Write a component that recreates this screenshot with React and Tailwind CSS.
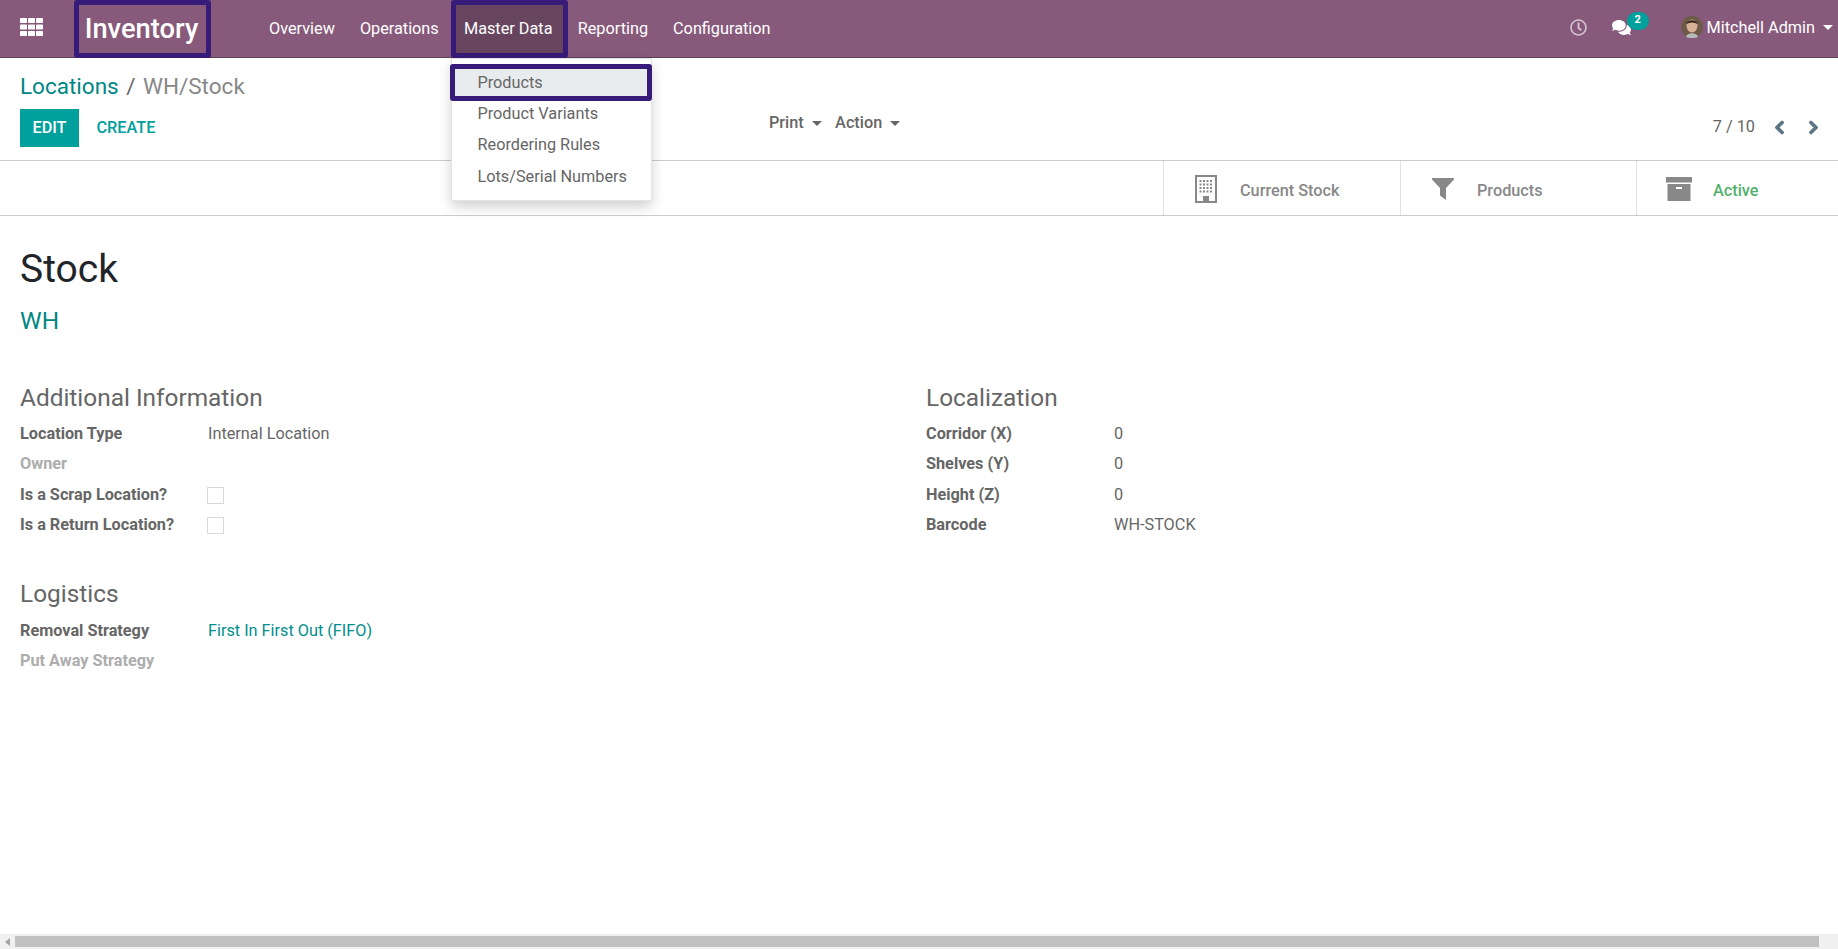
import React from "react";
import { FaChevronLeft, FaChevronRight, FaComments, FaRegClock } from "react-icons/fa";

const font = { fontFamily: "Roboto, sans-serif" };

const AppsIcon = () => (
  <svg width="23" height="18" viewBox="0 0 23 18" fill="#fff">
    {[0, 8, 16].map((x) =>
      [0, 6.5, 13].map((y) => <rect key={`${x}-${y}`} x={x} y={y} width="7" height="5" rx="0.8" />)
    )}
  </svg>
);

const BuildingIcon = () => (
  <svg width="22" height="28" viewBox="0 0 22 28" fill="#888">
    <path d="M0 0h22v28H0zM2 2v24h6v-5h6v5h6V2z" fillRule="evenodd" />
    {[5, 8.5, 12, 15.5].map((y) =>
      [4.5, 8, 11.5, 15].map((x) => <rect key={`${x}-${y}`} x={x} y={y} width="2" height="2" />)
    )}
  </svg>
);

const FilterIcon = () => (
  <svg width="22" height="22" viewBox="0 0 22 22" fill="#888">
    <path d="M0 0h22v1.5L14 10v12l-6-4.500V10L0 1.500z" />
  </svg>
);

const ArchiveIcon = () => (
  <svg width="26" height="24" viewBox="0 0 26 24" fill="#888">
    <rect x="0" y="0" width="26" height="5.500" />
    <path d="M1.500 7h23v17h-23zM10 10v2h6v-2z" fillRule="evenodd" />
  </svg>
);

const Avatar = () => (
  <svg width="22" height="22" viewBox="0 0 22 22">
    <circle cx="11" cy="11" r="11" fill="#6d5a47" />
    <ellipse cx="11" cy="10" rx="5.500" ry="6.500" fill="#d8b199" />
    <path d="M5 8c1-5 11-5 12 0-4-2-8-2-12 0z" fill="#38291f" />
    <path d="M5 21c1-5 11-5 12 0-3 1.500-9 1.500-12 0z" fill="#b4bdb8" />
  </svg>
);

const Caret = ({ color = "border-t-[#fff]" }) => (
  <span className={`inline-block w-0 h-0 border-x-[5px] border-x-transparent border-t-[5px] ${color}`} />
);

const NavItem = ({ children, className = "" }) => <span className={`px-[13px] text-[#fff] ${className}`}>{children}</span>;

const Field = ({ label, value, muted, checkbox, link }) => (
  <div className="flex h-[30.3px] items-center">
    <span className={`w-[188px] font-bold ${muted ? "text-[#adadad]" : "text-[#666]"}`}>{label}</span>
    {checkbox && <span className="w-[17px] h-[17px] -ml-[1px] mt-[1px] border border-[#d9d9d9] bg-[#fff]" />}
    {value && <span className={link ? "text-[#008f8c]" : "text-[#666]"}>{value}</span>}
  </div>
);

const StatButton = ({ icon, label, width, green }) => (
  <div className={`${width} h-full pt-[5px] flex items-center border-l border-[#dee2e6]`}>
    <span className="w-[76px] pl-[7px] flex justify-center shrink-0 -mt-[3px]">{icon}</span>
    <span className={`font-medium mt-[2px] ${green ? "text-[#4fb169]" : "text-[#888]"}`}>{label}</span>
  </div>
);

export default function App() {
  return (
    <div className="relative h-[949px] w-full flex flex-col text-[16.25px] overflow-hidden bg-[#fff]" style={font}>
      {/* top bar */}
      <div className="h-[58px] bg-[#875A7B] border-b border-[#5f4057] flex items-center shrink-0">
        <div className="w-[74px] pl-[20px] flex -mt-[4px]"><AppsIcon /></div>
        <div className="w-[137px] h-[58px] border-[5px] rounded-[3px] border-[#371b78] pt-[1px] pr-[2px] flex items-center justify-center text-[#fff] text-[27.3px] font-medium">
          Inventory
        </div>
        <div className="flex items-center ml-[45px] pt-[1px]">
          <NavItem>Overview</NavItem>
          <NavItem className="-ml-[1px]">Operations</NavItem>
          <div className="w-[117px] -ml-[1px] h-[58px] border-[5px] rounded-[3px] border-[#371b78] bg-[#68455f] pr-[2px] flex items-center justify-center text-[#fff]">
            Master Data
          </div>
          <NavItem className="-ml-[3px]">Reporting</NavItem>
          <NavItem className="-ml-[1px]">Configuration</NavItem>
        </div>
        <div className="ml-auto flex items-center -mt-[3px]">
          <FaRegClock className="text-[#d5c4d1] text-[17px] mr-[25px]" />
          <div className="relative mr-[50px]">
            <FaComments className="text-[#fff] text-[19px]" />
            <span className="absolute -top-[6px] left-[15px] w-[22px] h-[18px] rounded-full bg-[#00A09D] text-[#fff] text-[11px] font-bold flex items-center justify-center">
              2
            </span>
          </div>
          <Avatar />
          <span className="text-[#fff] ml-[4px] mr-[8px] mt-[3px]">Mitchell Admin</span>
          <span className="mr-[5px] flex"><Caret /></span>
        </div>
      </div>

      {/* control panel */}
      <div className="h-[103px] shrink-0 border-b border-[#ccc] flex flex-col px-[20px] pt-[12px]">
        <div className="text-[22.5px] leading-[32px] text-[#888]">
          <span className="text-[#008784]">Locations</span>
          <span className="mx-[7.5px] text-[#666]">/</span>
          <span>WH/Stock</span>
        </div>
        <div className="flex items-start mt-[7px]">
          <div className="w-[59px] h-[38px] bg-[#00A09D] text-[#fff] font-medium flex items-center justify-center">EDIT</div>
          <div className="ml-[17.5px] h-[38px] flex items-center text-[#00A09D] font-medium">CREATE</div>
          <div className="ml-[613.5px] -mt-[5px] h-[38px] flex items-center text-[#666] font-medium gap-[8px]">
            Print <Caret color="border-t-[#666]" />
          </div>
          <div className="ml-[13.5px] -mt-[5px] h-[38px] flex items-center text-[#666] font-medium gap-[8px]">
            Action <Caret color="border-t-[#666]" />
          </div>
          <div className="ml-auto -mt-[1px] h-[38px] flex items-center text-[#666]">
            <span>7 / 10</span>
            <FaChevronLeft className="ml-[17px] text-[#5d7583] text-[15px] stroke-[40]" />
            <FaChevronRight className="ml-[19px] -mr-[3px] text-[#5d7583] text-[15px] stroke-[40]" />
          </div>
        </div>
      </div>

      {/* status buttons */}
      <div className="h-[55px] shrink-0 border-b border-[#ccc] flex justify-end">
        <StatButton width="w-[237px]" label="Current Stock" icon={<BuildingIcon />} />
        <StatButton width="w-[236px]" label="Products" icon={<FilterIcon />} />
        <StatButton width="w-[202px]" label="Active" green icon={<ArchiveIcon />} />
      </div>

      {/* form */}
      <div className="flex-1 px-[20px] pt-[28px]">
        <h1 className="text-[39px] leading-[50px] text-[#212529]">Stock</h1>
        <div className="text-[24.4px] leading-[30px] mt-[12px] text-[#008784]">WH</div>
        <div className="flex mt-[44px]">
          <div className="w-[906px]">
            <div className="text-[24.4px] leading-[36px] text-[#666] mb-[3px]">Additional Information</div>
            <Field label="Location Type" value="Internal Location" />
            <Field label="Owner" muted />
            <Field label="Is a Scrap Location?" checkbox />
            <Field label="Is a Return Location?" checkbox />
            <div className="text-[24.4px] leading-[36px] text-[#666] mt-[36px] mb-[4px]">Logistics</div>
            <Field label="Removal Strategy" value="First In First Out (FIFO)" link />
            <Field label="Put Away Strategy" muted />
          </div>
          <div className="flex-1">
            <div className="text-[24.4px] leading-[36px] text-[#666] mb-[3px]">Localization</div>
            <Field label="Corridor (X)" value="0" />
            <Field label="Shelves (Y)" value="0" />
            <Field label="Height (Z)" value="0" />
            <Field label="Barcode" value="WH-STOCK" />
          </div>
        </div>
      </div>

      {/* fake horizontal scrollbar */}
      <div className="h-[15px] shrink-0 bg-[#f0f0f0] flex items-center">
        <div className="w-[15px] flex justify-center">
          <span className="w-0 h-0 border-y-[4px] border-y-transparent border-r-[5px] border-r-[#a3a3a3]" />
        </div>
        <div className="w-[1804px] h-[11px] bg-[#c1c1c1]" />
      </div>

      {/* Master Data dropdown */}
      <div className="absolute left-[451px] top-[58px] w-[201px] h-[143px] bg-[#fff] border border-[#e4e4e4] shadow-[0_6px_12px_rgba(0,0,0,0.18)] text-[#666] pt-[5px]">
        <div className="-ml-[2px] -mr-[1px] h-[37px] border-[5px] rounded-[3px] border-[#371b78] bg-[#e9ecef] pt-[1px] flex items-center pl-[22.5px]">Products</div>
        <div className="h-[31.5px] -mt-[3px] flex items-center pl-[25.5px]">Product Variants</div>
        <div className="h-[31.5px] flex items-center pl-[25.5px]">Reordering Rules</div>
        <div className="h-[31.5px] flex items-center pl-[25.5px]">Lots/Serial Numbers</div>
      </div>
    </div>
  );
}
